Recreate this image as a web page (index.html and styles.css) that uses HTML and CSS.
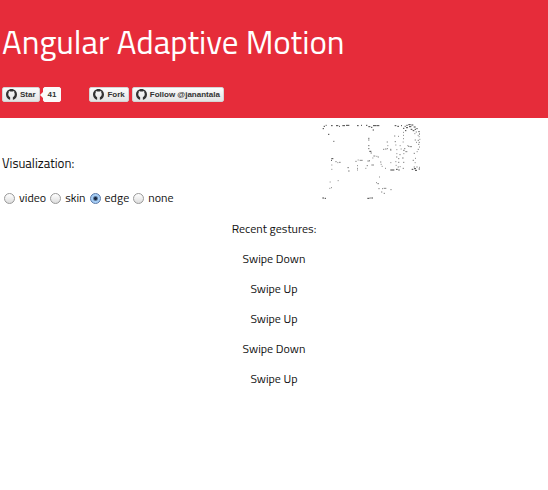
FILE: index.html
```html
<!DOCTYPE html>
<html lang="en">
<head>
<meta charset="utf-8">
<meta name="viewport" content="width=device-width, initial-scale=1">
<title>Angular Adaptive Motion</title>
<link rel="stylesheet" href="styles.css">
</head>
<body>
<svg class="sprite" aria-hidden="true">
  <symbol id="mark" viewBox="0 0 16 16">
    <path d="M8 0C3.58 0 0 3.58 0 8c0 3.54 2.29 6.53 5.47 7.59.4.07.55-.17.55-.38v-3.3C4.600 11.300 3.300 9.900 3.300 7.300c0-.9.3-1.600.8-2.200-.1-.4-.3-1.200.1-2.200.7 0 1.500.4 2.100.9a7 7 0 0 1 3.400 0c.6-.5 1.400-.9 2.100-.9.400 1 .200 1.800.1 2.200.5.6.8 1.300.8 2.200 0 2.600-1.300 4-2.720 4.610v3.300c0 .21.15.46.55.38A8.010 8.010 0 0 0 16 8c0-4.420-3.580-8-8-8z"/>
  </symbol>
</svg>
<header class="banner">
  <h1>Angular Adaptive Motion</h1>
  <nav class="social">
    <div class="star">
      <a class="btn" href="#"><svg class="icon" aria-hidden="true"><use href="#mark"/></svg>Star</a>
      <a class="count" href="#">41</a>
    </div>
    <a class="btn" href="#"><svg class="icon" aria-hidden="true"><use href="#mark"/></svg>Fork</a>
    <a class="btn" href="#"><svg class="icon" aria-hidden="true"><use href="#mark"/></svg>Follow @janantala</a>
  </nav>
</header>
<main>
  <div class="top">
    <fieldset class="modes">
      <legend>Visualization:</legend>
      <div class="options">
        <label><input type="radio" name="mode">video</label>
        <label><input type="radio" name="mode">skin</label>
        <label><input type="radio" name="mode" checked>edge</label>
        <label><input type="radio" name="mode">none</label>
      </div>
    </fieldset>
    <svg class="edges" viewBox="21 18 300 225" aria-hidden="true">
      <path class="strong" d="M26 25h4M23 32h4M32 22h3M48 23h5M63 23h7M72 25h3M82 23h8M93 22h10M126 23h5M138 22h3M153 22h4M160 26h6M168 28h4M174 23h9M184 23h9M173 36h4M239 23h5M247 25h5M258 23h3M264 31h4M269 25h3M273 29h6M274 22h4M280 20h7M282 26h7M289 21h6M287 34h5M293 38h5M296 27h6M299 34h4M270 38h4M304 32h4M310 41h4M312 48h3M39 49h4M55 70h3M160 61h3M160 66h3M160 83h3M160 92h3M163 100h6M167 105h3M49 122h6M48 127h3M226 156h12M243 154h5M250 156h4M290 154h5M297 152h6M300 157h6M311 153h4M22 240h5M29 241h4M157 241h6M164 240h3M169 240h5"/>
      <path d="M61 131h4M67 134h3M72 133h5M49 141h3M49 154h3M97 149h5M99 159h5M121 130h4M128 126h3M134 127h9M126 143h3M126 151h3M126 156h3M151 151h3M155 143h4M157 129h7M162 128h3M172 120h3M175 114h6M184 115h3M188 117h4M169 141h8M195 132h4M197 139h3M200 145h3M210 151h3M192 177h3M183 194h3M187 197h5M190 212h4M201 212h3M206 211h8M226 215h4M198 222h4M206 226h4M44 192h3M68 188h3M43 211h3M48 209h3M237 54h4M249 55h3M264 43h3M264 52h3M215 72h4M239 71h4M263 72h3M204 94h4M210 93h5M217 83h3M216 92h3M225 94h4M226 97h3M241 81h3M254 83h3M244 95h3M257 93h3M264 97h5M267 92h4M271 101h6M279 85h4M284 86h7M277 83h3M299 66h4M303 73h3M308 67h4M311 56h3M313 64h3M311 73h4M309 79h4M312 87h3M308 94h4M305 101h3M296 106h4M244 107h3M253 110h4M265 107h3M243 117h4M249 122h4M261 120h5M241 131h3M249 133h4M264 133h4M226 134h3M242 142h3M248 147h4M254 146h3M263 151h4M300 121h3M293 127h4M299 134h3M296 147h4M304 147h4M312 148h3M302 42h4M298 47h3M308 52h3M264 62h3"/>
    </svg>
  </div>
  <section class="gestures">
    <p>Recent gestures:</p>
    <p>Swipe Down</p>
    <p>Swipe Up</p>
    <p>Swipe Up</p>
    <p>Swipe Down</p>
    <p>Swipe Up</p>
  </section>
</main>
</body>
</html>
```
FILE: styles.css
```css
* { box-sizing: border-box; }
body {
  margin: 0;
  background: #fff;
  color: #111;
  font: 12px/18px "Titillium Web", Roboto, sans-serif;
}
.sprite { position: absolute; width: 0; height: 0; }
.banner {
  padding: 20px 2px 16px;
  background: #e62c3a;
  color: #fff;
}
h1 {
  margin: 0 0 23px;
  font-size: 33px;
  line-height: 44px;
  font-weight: 500;
}
.social {
  display: flex;
  gap: 3px;
  font: bold 8px/13px "Liberation Sans", Arial, sans-serif;
}
.star { display: flex; gap: 3px; margin-right: 25px; }
.btn, .count {
  display: flex;
  align-items: center;
  border: 1px solid #d4d4d4;
  border-radius: 2px;
  color: #333;
  text-decoration: none;
  white-space: nowrap;
}
.btn {
  gap: 3px;
  padding: 0 3px;
  background: linear-gradient(#fcfcfc, #e4e4e4);
}
.count {
  position: relative;
  padding: 0 4px;
  border-color: #fafafa;
  background: #fafafa;
}
.count::before {
  content: "";
  position: absolute;
  left: -4px;
  top: 4px;
  border: 3px solid transparent;
  border-left: 0;
  border-right-color: #fafafa;
}
.icon { width: 11px; height: 11px; fill: #333; }
.top {
  display: grid;
  grid-template-columns: 7fr 5fr;
  padding-top: 6px;
}
.modes {
  min-width: 0;
  margin: 0;
  padding: 30px 2px 0;
  border: 0;
}
legend { float: left; width: 100%; padding: 0; margin-bottom: 17px; font-size: 13px; }
.options { clear: both; display: flex; gap: 4px; padding-left: 2px; }
.options label { display: flex; align-items: center; gap: 4px; }
input[type="radio"] {
  appearance: none;
  width: 11px;
  height: 11px;
  margin: 0;
  border: 1px solid #999;
  border-radius: 50%;
  background: linear-gradient(#fff, #ddd);
}
input[type="radio"]:checked {
  border-color: #5878a8;
  background: radial-gradient(circle, #16253f 0 1px, #a5cdf5 3px);
}
.edges {
  width: 100px;
  height: 75px;
  margin-left: 2px;
  fill: none;
  stroke: #888;
  stroke-width: 3;
}
.edges .strong { stroke: #444; }
.gestures { padding-top: 13px; text-align: center; }
.gestures p { margin: 0 0 12px; }
```
